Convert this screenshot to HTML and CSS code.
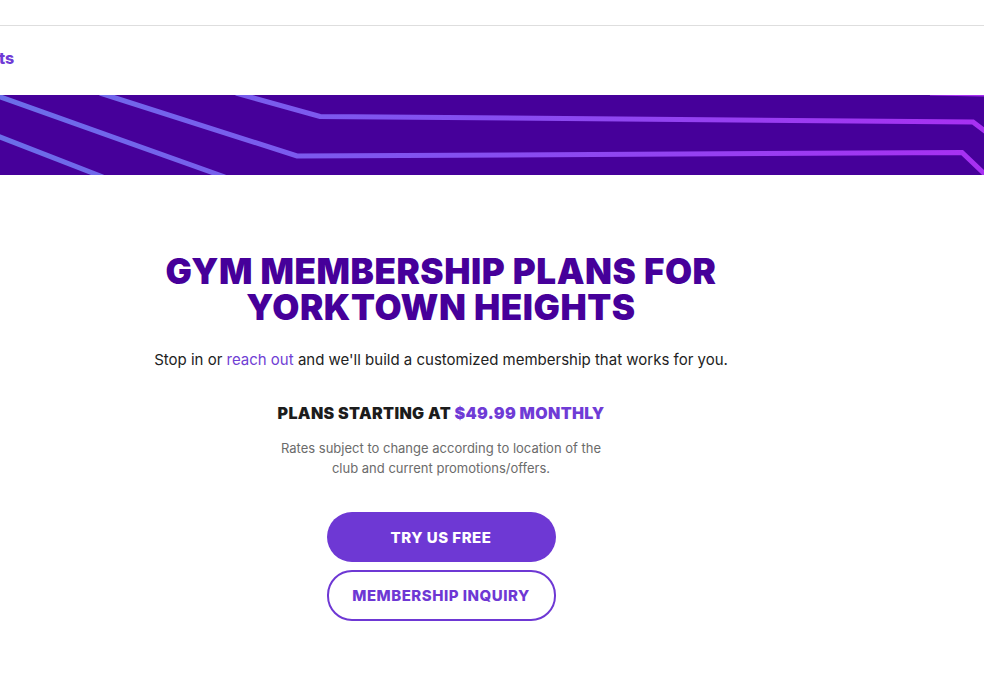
FILE: index.html
```html
<!DOCTYPE html>
<html lang="en">
<head>
<meta charset="utf-8">
<title>Gym Membership Plans</title>
<link rel="stylesheet" href="styles.css">
</head>
<body>
<div class="topbar"></div>
<header class="nav">
  <a class="nav-link" href="#">ts</a>
</header>
<div class="banner">
  <svg class="banner-art" viewBox="0 0 984 80" preserveAspectRatio="none" width="984" height="80">
    <defs>
      <linearGradient id="lg" x1="0" y1="0" x2="984" y2="0" gradientUnits="userSpaceOnUse">
        <stop offset="0" stop-color="#6b6ee9"/>
        <stop offset="0.45" stop-color="#8350f0"/>
        <stop offset="1" stop-color="#a830f2"/>
      </linearGradient>
    </defs>
    <g fill="none" stroke="url(#lg)" stroke-width="5">
      <polyline points="236,-2 320,21.5 973,27 990,40"/>
      <polyline points="100,-2 297,61 962,57.5 990,84"/>
      <polyline points="-5,0 225,82"/>
      <polyline points="-5,40 103,82"/>
      <polyline points="930,-2 990,-1"/>
    </g>
  </svg>
</div>
<main class="content">
  <h1 class="title">GYM MEMBERSHIP PLANS FOR<br>YORKTOWN HEIGHTS</h1>
  <p class="lead">Stop in or <a href="#" class="link">reach out</a> and we'll build a customized membership that works for you.</p>
  <p class="plans">PLANS STARTING AT <span class="price">$49.99 MONTHLY</span></p>
  <p class="note">Rates subject to change according to location of the club and current promotions/offers.</p>
  <div class="actions">
    <a href="#" class="btn btn-solid">TRY US FREE</a>
    <a href="#" class="btn btn-outline">MEMBERSHIP INQUIRY</a>
  </div>
</main>
</body>
</html>
```
FILE: styles.css
```css
* { box-sizing: border-box; }
html, body { margin: 0; padding: 0; background: #fff; }
body { font-family: "Inter", "Lato", "Noto Sans", sans-serif; color: #222; width: 984px; overflow: hidden; }

.topbar { height: 26px; border-bottom: 1px solid #dedede; }

.nav { height: 69px; display: flex; align-items: center; }
.nav-link { color: #6f3bd6; font-weight: 800; font-size: 16px; text-decoration: none; line-height: 1; margin-top: -6px; margin-left: -1px; }

.banner { height: 80px; background: #46009a; overflow: hidden; }
.banner-art { display: block; }

.content { width: 882px; display: flex; flex-direction: column; align-items: center; text-align: center; padding-top: 78px; }

.title { margin: 0; font-size: 35px; line-height: 36px; font-weight: 900; color: #46009a; letter-spacing: 0.55px; }

.lead { margin: 24px 0 0; font-size: 15px; line-height: 22px; color: #222; }
.link { color: #7040d4; text-decoration: none; }

.plans { margin: 31px 0 0; font-size: 16px; line-height: 22px; font-weight: 900; color: #1c1c1c; letter-spacing: 0.35px; }
.price { color: #6f3bd6; }

.note { margin: 14px 0 0; width: 340px; font-size: 13px; line-height: 20px; color: #6b6b6b; }

.actions { margin-top: 34px; display: flex; flex-direction: column; gap: 8px; }
.btn { width: 229px; height: 50px; border-radius: 25px; display: flex; align-items: center; justify-content: center; font-size: 15px; font-weight: 800; letter-spacing: 0.5px; text-decoration: none; }
.btn-solid { background: #6e38d4; color: #fff; }
.btn-outline { border: 2px solid #6e38d4; color: #6e38d4; background: #fff; height: 51px; }
```
